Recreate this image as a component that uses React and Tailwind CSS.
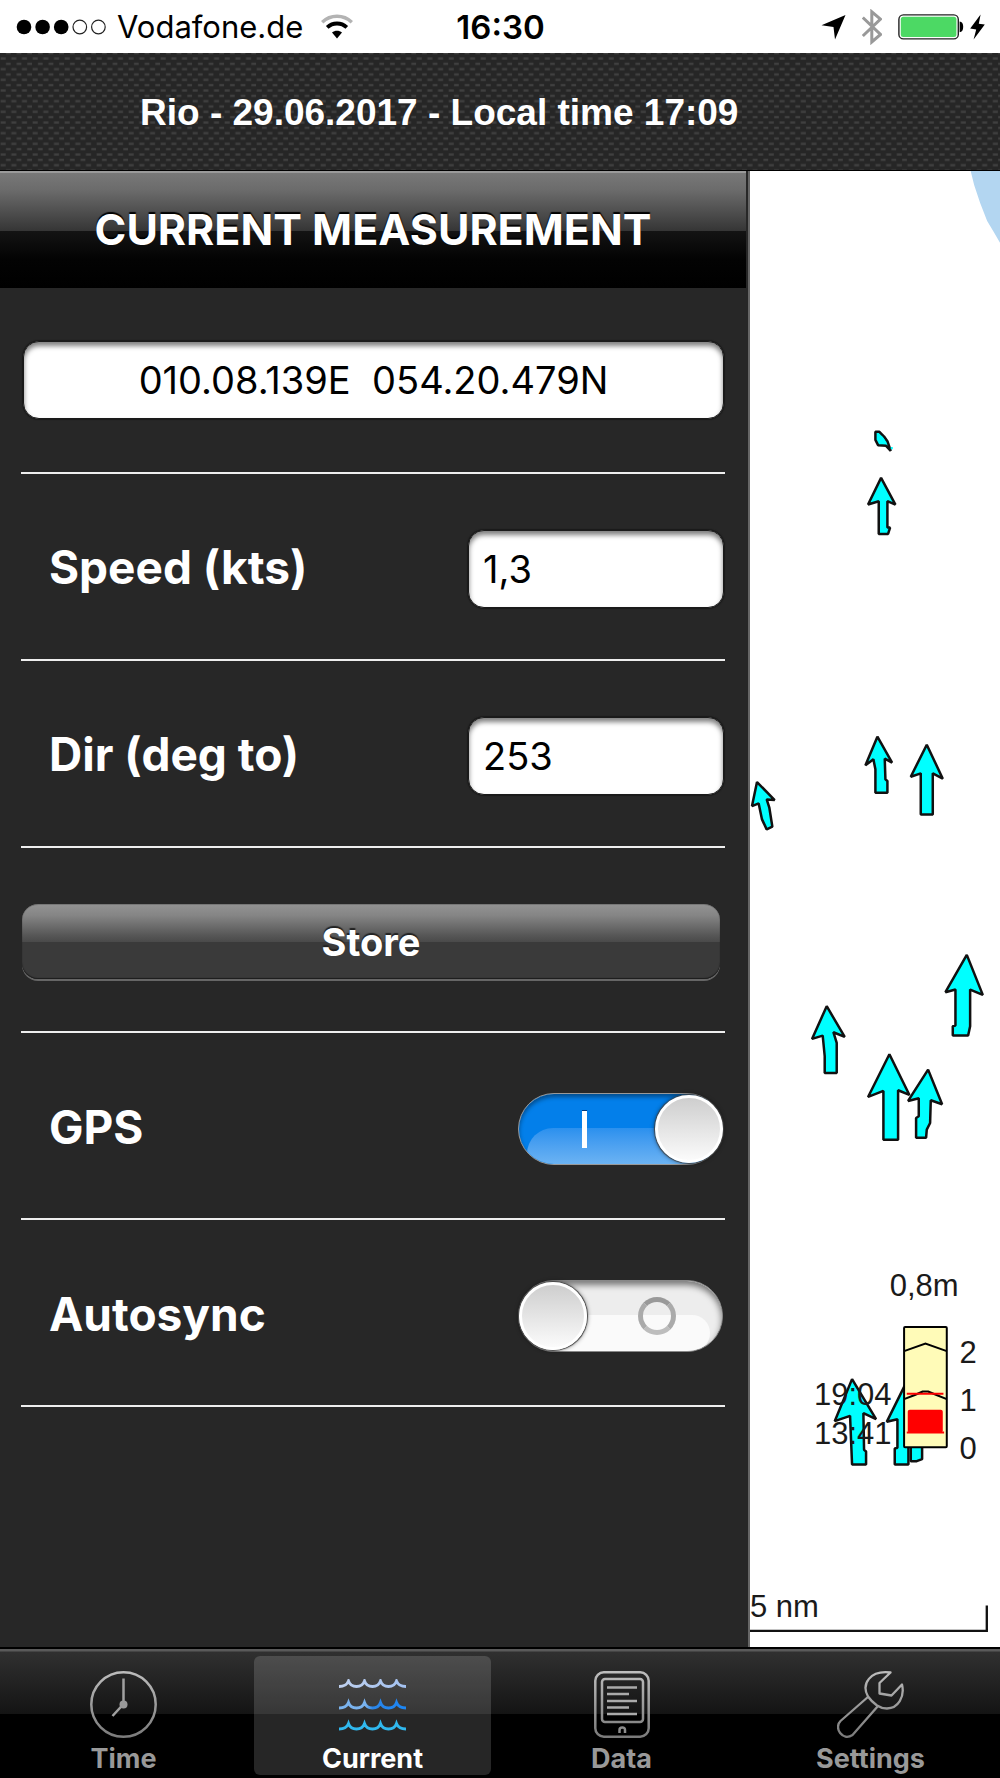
import { useId, useState } from "react";

const SANS = "font-[Inter,'Noto_Sans',sans-serif]";
const ARIAL = "font-['Liberation_Sans',Arial,sans-serif]";

function SignalDots() {
  return (
    <svg width="91" height="18" viewBox="0 0 91 18" aria-hidden="true">
      {[8, 26.6, 45.2].map((x) => (
        <circle key={x} cx={x} cy="9" r="7.3" fill="#000" />
      ))}
      {[63.8, 82.4].map((x) => (
        <circle key={x} cx={x} cy="9" r="6.8" fill="none" stroke="#222" strokeWidth="1.2" />
      ))}
    </svg>
  );
}

function WifiIcon() {
  return (
    <svg width="32" height="26" viewBox="0 0 32 26" fill="none" aria-hidden="true">
      <path d="M1.2 8.2C9.5 .2 22.5 .2 30.8 8.2" stroke="#b3b3b3" strokeWidth="3.4" />
      <path d="M6.2 13.4C11.8 8.2 20.2 8.2 25.8 13.4" stroke="#000" strokeWidth="3.8" />
      <path d="M11 18.6C13.8 16.1 18.2 16.1 21 18.6L16 24.4Z" fill="#000" />
    </svg>
  );
}

function StatusBar() {
  return (
    <div className={`${SANS} grid h-[53px] grid-cols-[1fr_auto_1fr] items-center bg-white pt-px pr-[15px] pl-4 text-black`}>
      <div className="flex items-center">
        <SignalDots />
        <span className="ml-2.5 text-[31px] leading-9 whitespace-nowrap">Vodafone.de</span>
        <span className="ml-[18px]">
          <WifiIcon />
        </span>
      </div>
      <span className="text-[33px] leading-9 font-semibold">16:30</span>
      <div className="flex items-center justify-end">
        <svg width="25" height="25" viewBox="0 0 25 25" aria-hidden="true">
          <path d="M24.5 0L14 24.5L12.5 12L.5 10.2Z" fill="#000" />
        </svg>
        <svg className="ml-4" width="20" height="36" viewBox="0 0 20 36" fill="none" stroke="#999" strokeWidth="3" aria-hidden="true">
          <path d="M.8 8.5L18.5 25.5L9.8 33V2.8L18.5 10.2L.8 27" />
        </svg>
        <svg className="ml-4" width="66" height="26" viewBox="0 0 66 26" aria-hidden="true">
          <rect x=".9" y=".9" width="59.4" height="24" rx="4.5" fill="#fff" stroke="#222" strokeWidth="1.4" />
          <rect x="2.8" y="2.8" width="55.6" height="20.2" rx="2.5" fill="#4cd964" />
          <path d="M61.6 7.5Q65.2 8 65.2 12.9T61.6 18.3Z" fill="#000" />
        </svg>
        <svg className="ml-1.5" width="15" height="26" viewBox="0 0 15 26" aria-hidden="true">
          <path d="M10.6 .4L.2 14.6L6.2 15.4L3.6 25.6L14.8 10.6L8.8 9.8Z" fill="#000" />
        </svg>
      </div>
    </div>
  );
}

function Header() {
  return (
    <header className="relative h-[118px] border-b border-black bg-[#262626]">
      <svg className="absolute inset-0 h-full w-full" aria-hidden="true">
        <defs>
          <pattern id="weave" width="32" height="32" patternUnits="userSpaceOnUse" patternTransform="translate(0 3) scale(.3334)">
            <rect x="2" y="4" width="15" height="7" fill="#404040" />
            <rect x="18" y="20" width="14" height="7" fill="#404040" />
          </pattern>
        </defs>
        <rect width="100%" height="100%" fill="url(#weave)" />
      </svg>
      <h1 className={`${ARIAL} relative pt-[37px] pl-[140px] text-[37px] leading-[46px] font-bold whitespace-nowrap text-white`}>
        Rio - 29.06.2017 - Local time 17:09
      </h1>
    </header>
  );
}

const FIELD =
  "h-[78px] rounded-2xl border border-[#1a1a1a] bg-white text-[38px] text-black shadow-[inset_0_4px_5px_rgba(0,0,0,0.5),0_0_1px_1px_#1a1a1a] outline-none";

function FieldRow({ label, value, onChange }) {
  const id = useId();
  return (
    <div className="flex items-center justify-between border-b-2 border-[#eeeeee] pt-14 pr-px pb-[51px] pl-7">
      <label htmlFor={id} className="pb-1 text-[46px] leading-[60px] font-bold">
        {label}
      </label>
      <input id={id} value={value} onChange={(e) => onChange(e.target.value)} className={`${FIELD} w-64 px-3.5`} />
    </div>
  );
}

function SwitchRow({ label, on, onChange }) {
  const id = useId();
  return (
    <div className="flex items-center justify-between border-b-2 border-[#eeeeee] pt-15 pr-0.5 pb-[53px] pl-7">
      <label htmlFor={id} className="pb-1 text-[46px] leading-[60px] font-bold">
        {label}
      </label>
      <div className="relative h-[72px] w-[205px]">
        <input
          id={id}
          type="checkbox"
          role="switch"
          checked={on}
          onChange={(e) => onChange(e.target.checked)}
          className="absolute inset-0 z-10 h-full w-full cursor-pointer opacity-0"
        />
        {on ? (
          <div className="relative h-full overflow-hidden rounded-full border border-[#999999] bg-[#037fea] shadow-[inset_0_3px_4px_rgba(0,0,0,0.4)]">
            <div className="absolute top-[34px] right-0 bottom-0 left-2 rounded-tl-[26px] bg-linear-to-b from-[#2a90ee] to-[#6bb3f3]" />
            <div className="absolute top-[17px] left-[63px] h-[37px] w-[5px] bg-white shadow-[0_-1px_0_#003a80]" />
          </div>
        ) : (
          <div className="relative h-full overflow-hidden rounded-full border border-[#888888] bg-[#ededed] shadow-[inset_0_4px_6px_rgba(0,0,0,0.5)]">
            <div className="absolute top-[34px] right-3 bottom-0 left-0 rounded-r-full bg-[#fafafa]" />
            <div className="absolute top-4 left-[119px] size-[38px] rounded-full border-[5px] border-t-[#999999] border-r-[#aaaaaa] border-b-[#bdbdbd] border-l-[#aaaaaa]" />
          </div>
        )}
        <div
          className={`absolute top-0.5 size-[68px] rounded-full border-[3px] border-white bg-linear-to-b from-[#cecece] to-[#fbfbfb] shadow-[0_0_1px_1px_#444444,0_0_4px_1px_rgba(0,0,0,0.4)] ${on ? "right-0" : "left-px"}`}
        />
      </div>
    </div>
  );
}

function Panel() {
  const [position, setPosition] = useState("010.08.139E  054.20.479N");
  const [speed, setSpeed] = useState("1,3");
  const [dir, setDir] = useState("253");
  const [gps, setGps] = useState(true);
  const [autosync, setAutosync] = useState(false);
  return (
    <section className={`${SANS} w-3/4 border-r-2 border-[#666666] bg-[#272727] text-white`}>
      <h2 className="mr-0.5 border-t-2 border-[#9a9a9a] bg-[linear-gradient(to_bottom,#787878_0%,#6b6b6b_15%,#363636_50%,#141414_50%,#030303_75%,#000_100%)] pt-8 pb-[35px] text-center text-[43px] leading-12 font-bold whitespace-nowrap [text-shadow:0_-2px_1px_#000]">
        CURRENT MEASUREMENT
      </h2>
      <form className="mr-[23px] ml-[21px]" onSubmit={(e) => e.preventDefault()}>
        <div className="border-b-2 border-[#eeeeee] pt-[53px] pr-px pb-[53px] pl-0.5">
          <input
            aria-label="Position"
            value={position}
            onChange={(e) => setPosition(e.target.value)}
            className={`${FIELD} w-full text-center whitespace-pre`}
          />
        </div>
        <FieldRow label="Speed (kts)" value={speed} onChange={setSpeed} />
        <FieldRow label="Dir (deg to)" value={dir} onChange={setDir} />
        <div className="border-b-2 border-[#eeeeee] pt-14 pr-[5px] pb-13 pl-px">
          <button
            type="submit"
            className="block h-[75px] w-full rounded-2xl border-t border-[#777777] bg-[linear-gradient(to_bottom,#929292_0%,#858585_14%,#555_42%,#4a4a4a_50%,#3a3a3a_50%,#3a3a3a_100%)] text-[38px] font-bold shadow-[inset_0_-1px_1px_#1c1c1c,0_2px_0_#666666] [text-shadow:0_-2px_1px_#222]"
          >
            Store
          </button>
        </div>
        <SwitchRow label="GPS" on={gps} onChange={setGps} />
        <SwitchRow label="Autosync" on={autosync} onChange={setAutosync} />
      </form>
    </section>
  );
}

const ARROWS_NORTH = [
  "406,98 418,98 432,112 442,126 452,155 438,140 414,138 406,122",
  "423,236 466,316 442,306 442,385 450,385 444,404 416,404 416,306 384,316",
  "412,1012 456,1090 434,1078 436,1140 442,1145 442,1180 406,1180 406,1110 400,1080 376,1098",
  "560,1036 608,1138 578,1122 578,1245 542,1245 542,1122 512,1132",
  "51,1148 104,1202 80,1200 88,1225 97,1282 80,1290 66,1260 56,1212 36,1220",
];
const ARROWS_MIDDLE = [
  "260,230 314,322 280,308 290,340 290,430 254,430 254,380 248,318 216,328",
  "680,76 728,196 690,180 690,290 684,318 638,318 638,290 646,288 646,180 616,188",
  "448,374 508,496 474,482 474,630 430,630 430,484 384,502",
  "564,420 606,524 572,512 570,580 560,600 558,624 528,624 528,565 536,560 536,506 504,514",
];
const ARROWS_SOUTH = [
  "512,500 546,500 546,628 530,634 512,634",
  "505,385 560,500 505,505 505,644 464,644 464,596 472,594 472,508 440,516",
  "336,388 408,508 370,490 372,600 378,605 378,644 336,644 330,498 284,514",
];

function Arrows({ points }) {
  return points.map((p) => (
    <polygon key={p} points={p} fill="#00ffff" stroke="#111" strokeWidth="7.500" strokeLinejoin="bevel" />
  ));
}

function CurrentMap() {
  return (
    <main className="relative flex-1 overflow-hidden bg-white">
      <svg
        className={`${ARIAL} absolute inset-0 h-full w-full`}
        viewBox="0 0 250 1475"
        preserveAspectRatio="xMinYMin slice"
        role="img"
        aria-label="Chart of current arrows"
      >
        <path d="M220.500 0L224 14L230 32L237 50L243 60L250 72V0Z" fill="#b3d6f1" />
        <g transform="translate(-10 228) scale(.3333)">
          <Arrows points={ARROWS_NORTH} />
          <path d="M422 112L432 126M452 147H458" stroke="#00ffff" strokeWidth="7" />
        </g>
        <g transform="translate(-10 758) scale(.3333)">
          <Arrows points={ARROWS_MIDDLE} />
        </g>
        <g transform="translate(-10 1078) scale(.3333)">
          <Arrows points={ARROWS_SOUTH} />
          <g fill="#1a1a1a" fontSize="93">
            <text x="222" y="467">19:04</text>
            <text x="222" y="583">13:41</text>
            <text x="449" y="138">0,8m</text>
            <text x="658" y="339">2</text>
            <text x="658" y="483">1</text>
            <text x="658" y="626">0</text>
            <text x="30" y="1101">5 nm</text>
          </g>
          <rect x="492" y="232" width="128" height="360" rx="3" fill="#fffbb8" stroke="#000" strokeWidth="6" />
          <path d="M492 304L556 281L620 304M492 448Q525 436 548 425H564Q590 436 620 448" fill="none" stroke="#000" strokeWidth="6" />
          <path d="M500 432H610M500 548H612" stroke="#ff0000" strokeWidth="6" />
          <rect x="503" y="480" width="105" height="68" rx="6" fill="#ff0000" />
          <path d="M20 1143H740V1067" fill="none" stroke="#111" strokeWidth="7" />
        </g>
      </svg>
    </main>
  );
}

function ClockIcon() {
  return (
    <svg width="67" height="67" viewBox="0 0 67 67" fill="none" stroke="url(#metal)" strokeWidth="2.5" aria-hidden="true">
      <circle cx="33.500" cy="33.500" r="32.200" />
      <path d="M33.500 7.500V33L22.500 45" stroke="#a0a0a0" />
      <circle cx="33.500" cy="33.500" r="4" fill="#999" stroke="none" />
    </svg>
  );
}

const WAVE = "c4.500 0 8-1.500 9.500-5.500c2.500 7.300 13.500 7.300 16 0c2.500 7.300 13.500 7.300 16 0c2.500 7.300 13.500 7.300 16 0c1.500 4 4.500 5.500 9.500 5.500";

function WavesIcon() {
  return (
    <svg width="67" height="52" viewBox="0 0 67 52" fill="none" strokeWidth="2.800" aria-hidden="true">
      <defs>
        <linearGradient id="wave-top">
          <stop offset="0" stopColor="#bed0ee" />
          <stop offset="1" stopColor="#a3c1f0" />
        </linearGradient>
        <linearGradient id="wave-mid">
          <stop offset=".4" stopColor="#7ab3ee" />
          <stop offset=".5" stopColor="#2b86e8" />
          <stop offset="1" stopColor="#1b86f5" />
        </linearGradient>
      </defs>
      <path d={`M0 7.500${WAVE}`} stroke="url(#wave-top)" />
      <path d={`M0 29${WAVE}`} stroke="url(#wave-mid)" />
      <path d={`M0 50${WAVE}`} stroke="#30b8ee" />
    </svg>
  );
}

function TabletIcon() {
  return (
    <svg width="56" height="67" viewBox="0 0 56 67" fill="none" stroke="url(#metal)" strokeWidth="2.500" aria-hidden="true">
      <rect x="1.300" y="1.300" width="53.400" height="64.400" rx="8.500" />
      <rect x="8" y="8" width="41" height="43" rx="3" />
      <path d="M13 16.500H43M13 23H35M13 30H43M13 36.500H35M13 43H43" stroke="#aaa" strokeWidth="2.600" />
      <path d="M25.500 62V59Q25.500 56.500 28.300 56.500T31 59V62" stroke="#8c8c8c" />
    </svg>
  );
}

function WrenchIcon() {
  return (
    <svg width="67" height="67" viewBox="0 0 67 67" fill="none" stroke="url(#metal)" strokeWidth="2.300" strokeLinejoin="round" aria-hidden="true">
      <path d="M53.500 1.500L42.500 12V22.500L54.500 24.500L65 13.500C68 26 61 37.500 50 37.500C46 37.500 43 36.500 40 34.500C36 31.500 33 28.500 31 25.500C24 13 33 -1 53.500 1.500Z" />
      <path d="M31.500 25.500L3.500 50C-3.500 57 5.500 70.500 15.500 64L41 35" />
    </svg>
  );
}

const TABS = [
  { name: "Time", Icon: ClockIcon },
  { name: "Current", Icon: WavesIcon },
  { name: "Data", Icon: TabletIcon },
  { name: "Settings", Icon: WrenchIcon },
];

function TabBar() {
  const [active, setActive] = useState("Current");
  return (
    <nav
      className={`${SANS} grid h-[131px] grid-cols-4 gap-3 border-t-2 border-black bg-[linear-gradient(to_bottom,#5a5a5a_0px,#5a5a5a_2px,#303030_3px,#141414_65px,#000_65px)] pt-[7px] pr-[11px] pb-1.5 pl-[5px]`}
    >
      <svg className="absolute size-0" aria-hidden="true">
        <linearGradient id="metal" gradientUnits="userSpaceOnUse" x1="0" y1="0" x2="0" y2="67">
          <stop offset="0" stopColor="#bdbdbd" />
          <stop offset="1" stopColor="#7a7a7a" />
        </linearGradient>
      </svg>
      {TABS.map(({ name, Icon }) => (
        <button
          key={name}
          type="button"
          aria-pressed={active === name}
          onClick={() => setActive(name)}
          className={`flex flex-col items-center rounded-md pt-[15px] ${active === name ? "bg-white/15 text-white" : "text-[#999999]"}`}
        >
          <span className="flex h-[67px] items-center">
            <Icon />
          </span>
          <span className="mt-[5px] text-[27px] leading-8 font-bold">{name}</span>
        </button>
      ))}
    </nav>
  );
}

export default function App() {
  return (
    <div className="flex min-h-screen flex-col bg-white">
      <StatusBar />
      <Header />
      <div className="flex flex-1">
        <Panel />
        <CurrentMap />
      </div>
      <TabBar />
    </div>
  );
}
